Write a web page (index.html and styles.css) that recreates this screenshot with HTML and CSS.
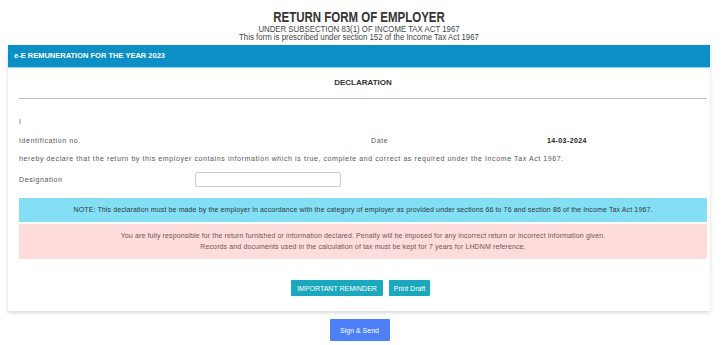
FILE: index.html
```html
<!DOCTYPE html>
<html lang="en">
<head>
    <meta charset="UTF-8">
    <meta name="viewport" content="width=device-width, initial-scale=1.0">
    <title>Return Form of Employer</title>
    <link rel="stylesheet" href="styles.css">
</head>
<body>
    <div class="page">
        <div class="header">
            <h1>RETURN FORM OF EMPLOYER</h1>
            <p>UNDER SUBSECTION 83(1) OF INCOME TAX ACT 1967</p>
            <p>This form is prescribed under section 152 of the Income Tax Act 1967</p>
        </div>

        <div class="card">
            <div class="card-title">e-E REMUNERATION FOR THE YEAR 2023</div>
            <div class="card-body">
                <h2>DECLARATION</h2>
                <hr>

                <div class="row">I</div>
                <div class="row row-split">
                    <span class="col-label">Identification no.</span>
                    <span class="col-date">Date</span>
                    <span class="col-value">14-03-2024</span>
                </div>
                <div class="row declare">hereby declare that the return by this employer contains information which is true, complete and correct as required under the Income Tax Act 1967.</div>

                <div class="row row-input">
                    <label for="designation">Designation</label>
                    <input type="text" id="designation">
                </div>

                <div class="alert alert-info">NOTE: This declaration must be made by the employer in accordance with the category of employer as provided under sections 66 to 76 and section 86 of the Income Tax Act 1967.</div>
                <div class="alert alert-danger">
                    You are fully responsible for the return furnished or information declared. Penalty will be imposed for any incorrect return or incorrect information given.<br>
                    Records and documents used in the calculation of tax must be kept for 7 years for LHDNM reference.
                </div>

                <div class="actions">
                    <button class="btn btn-teal btn-reminder">IMPORTANT REMINDER</button>
                    <button class="btn btn-teal btn-print">Print Draft</button>
                </div>
            </div>
        </div>

        <div class="submit">
            <button class="btn btn-blue">Sign &amp; Send</button>
        </div>
    </div>
</body>
</html>
```

FILE: styles.css
```css
body {
    margin: 0;
    background-color: #fff;
    font-family: "Liberation Sans", Arial, sans-serif;
    color: #333;
}

.page {
    width: 702px;
    margin-left: 8px;
}

.header {
    text-align: center;
    padding-top: 9.5px;
    box-sizing: border-box;
    height: 45px;
    color: #444;
}

.header h1 {
    margin: 0;
    font-size: 14px;
    line-height: 15px;
    font-weight: bold;
    color: #333;
    transform: scaleX(0.82);
}

.header p {
    margin: 0;
    font-size: 8.5px;
    line-height: 8.5px;
    transform: scaleX(0.92);
}

.card {
    background-color: #fff;
    box-shadow: 0 2px 4px rgba(0, 0, 0, 0.15);
}

.card-title {
    background-color: #0b8fc4;
    color: #fff;
    font-size: 7.5px;
    font-weight: bold;
    height: 22px;
    line-height: 22px;
    padding-left: 6px;
    border-bottom: 1px solid #8fd6f0;
}

.card-body {
    padding: 4px 3px 15px 11px;
}

.card-body h2 {
    margin: 0;
    text-align: center;
    font-size: 8px;
    line-height: 22px;
    color: #333;
}

.card-body hr {
    margin: 4px 0 0 0;
    border: none;
    border-top: 1px solid #bbb;
}

.row {
    font-size: 7px;
    letter-spacing: 0.6px;
    color: #555;
    line-height: 9px;
    margin-top: 10px;
}

.row:first-of-type {
    margin-top: 18px;
}

.row-split {
    display: flex;
}

.col-label {
    width: 352px;
}

.col-date {
    width: 176px;
}

.col-value {
    font-weight: bold;
    color: #222;
    letter-spacing: 0.4px;
}

.declare {
    margin-top: 9px;
}

.row-input {
    display: flex;
    align-items: center;
    margin-top: 9px;
}

.row-input label {
    width: 176px;
}

.row-input input {
    width: 146px;
    height: 15px;
    box-sizing: border-box;
    border: 1px solid #ccc;
    border-radius: 2px;
    padding: 0;
}

.alert {
    font-size: 7px;
    letter-spacing: 0.12px;
    text-align: center;
}

.alert-info {
    margin-top: 11px;
    background-color: #84dff4;
    height: 24px;
    line-height: 24px;
    color: #2a3a42;
}

.alert-danger {
    margin-top: 2px;
    background-color: #fedcdc;
    padding: 6px 0 7px 0;
    line-height: 11px;
    color: #715555;
}

.actions {
    display: flex;
    justify-content: center;
    gap: 6px;
    margin-top: 21px;
    padding-right: 5px;
}

.btn {
    font-family: "Liberation Sans", Arial, sans-serif;
    color: #fff;
    border: none;
    border-radius: 1px;
    cursor: pointer;
    padding: 0;
}

.btn-teal {
    background-color: #1ba8bc;
    font-size: 7px;
    height: 16px;
}

.btn-reminder {
    width: 92px;
}

.btn-print {
    width: 41px;
}

.submit {
    display: flex;
    justify-content: center;
    margin-top: 8px;
    padding-left: 1px;
}

.btn-blue {
    background-color: #4d80f6;
    font-size: 7px;
    width: 60px;
    height: 22px;
}
```
